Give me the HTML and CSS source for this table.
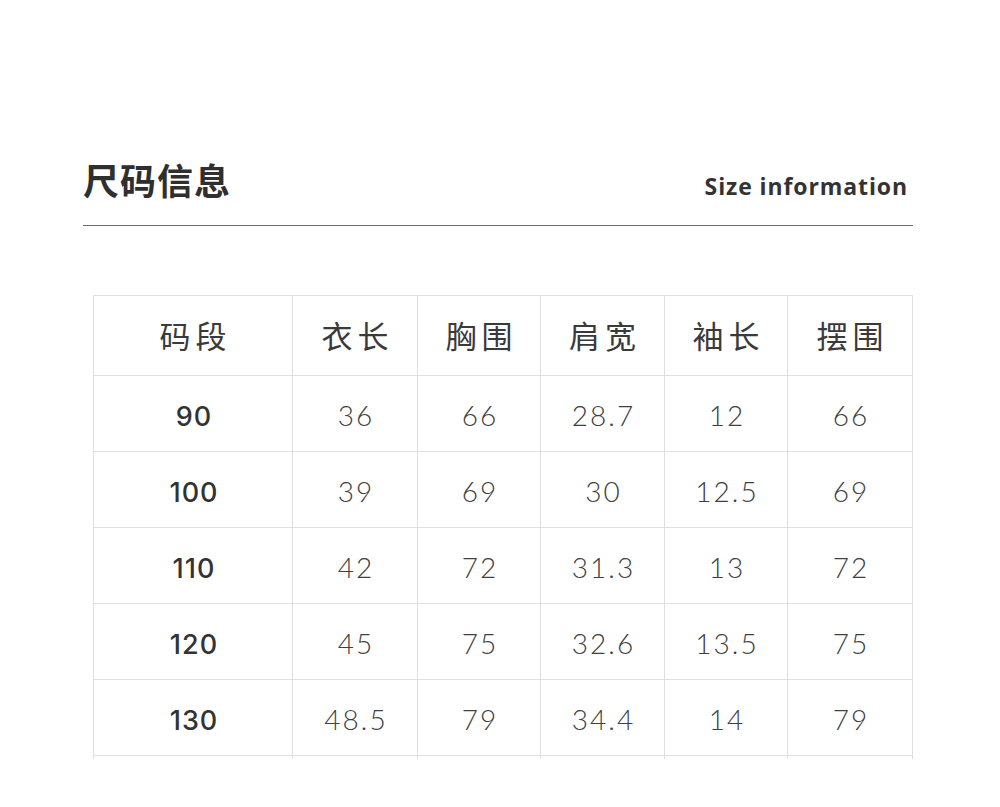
FILE: index.html
```html
<!DOCTYPE html>
<html lang="zh-CN">
<head>
<meta charset="utf-8">
<title>尺码信息</title>
<link rel="stylesheet" href="styles.css">
</head>
<body>
<div class="page">
  <header class="head">
    <h1 class="title">尺码信息</h1>
    <div class="subtitle">Size information</div>
  </header>
  <table class="size">
    <thead>
      <tr><th class="c1">码段</th><th>衣长</th><th>胸围</th><th>肩宽</th><th>袖长</th><th>摆围</th></tr>
    </thead>
    <tbody>
      <tr><td class="c1">90</td><td>36</td><td>66</td><td>28.7</td><td>12</td><td>66</td></tr>
      <tr><td class="c1">100</td><td>39</td><td>69</td><td>30</td><td>12.5</td><td>69</td></tr>
      <tr><td class="c1">110</td><td>42</td><td>72</td><td>31.3</td><td>13</td><td>72</td></tr>
      <tr><td class="c1">120</td><td>45</td><td>75</td><td>32.6</td><td>13.5</td><td>75</td></tr>
      <tr><td class="c1">130</td><td>48.5</td><td>79</td><td>34.4</td><td>14</td><td>79</td></tr>
      <tr class="tail"><td></td><td></td><td></td><td></td><td></td><td></td></tr>
    </tbody>
  </table>
</div>
</body>
</html>
```
FILE: styles.css
```css
html, body {
  margin: 0;
  padding: 0;
  background: #ffffff;
}
body {
  font-family: "Noto Sans CJK SC", "Noto Sans", sans-serif;
  color: #333333;
}
.page {
  width: 830px;
  margin-left: 83px;
  padding-top: 155px;
}
.head {
  display: flex;
  justify-content: space-between;
  align-items: flex-end;
  border-bottom: 1px solid #6a6a6a;
  padding-bottom: 20px;
}
.title {
  margin: 0 0 2px 0;
  font-size: 36px;
  line-height: 48px;
  font-weight: 700;
  letter-spacing: 1px;
  color: #2f2f2f;
}
.subtitle {
  font-family: "Open Sans", "Noto Sans", sans-serif;
  font-weight: 700;
  font-size: 23px;
  line-height: 30px;
  letter-spacing: 0.9px;
  color: #333333;
  margin-right: 5px;
  margin-bottom: 4px;
}
.size {
  margin-top: 69px;
  margin-left: 10px;
  width: 820px;
  border-collapse: collapse;
  table-layout: fixed;
}
.size th, .size td {
  border: 1px solid #dedede;
  text-align: center;
  padding: 0;
  color: #3a3a3a;
}
.size th {
  height: 76px;
  font-weight: 400;
  font-size: 31px;
  letter-spacing: 5px;
  text-indent: 5px;
  padding-bottom: 3px;
}
.size td {
  height: 72px;
  padding-top: 3px;
  font-family: "Lato", "Noto Sans", sans-serif;
  font-weight: 300;
  font-size: 28px;
  letter-spacing: 2px;
  text-indent: 2px;
  color: #404040;
}
.size td.c1 {
  height: 69px;
  padding-top: 6px;
  font-family: "Inter", "Noto Sans", sans-serif;
  font-weight: 500;
  letter-spacing: 1px;
  font-size: 27px;
  color: #333333;
}
.size tr.tail td {
  height: 3px;
  padding: 0;
  border-bottom: none;
}
.size th.c1 { width: 198px; }
.size th:nth-child(2) { width: 124px; }
.size th:nth-child(3) { width: 122px; }
.size th:nth-child(4) { width: 123px; }
.size th:nth-child(5) { width: 122px; }
.size th:nth-child(6) { width: 124px; }
```
